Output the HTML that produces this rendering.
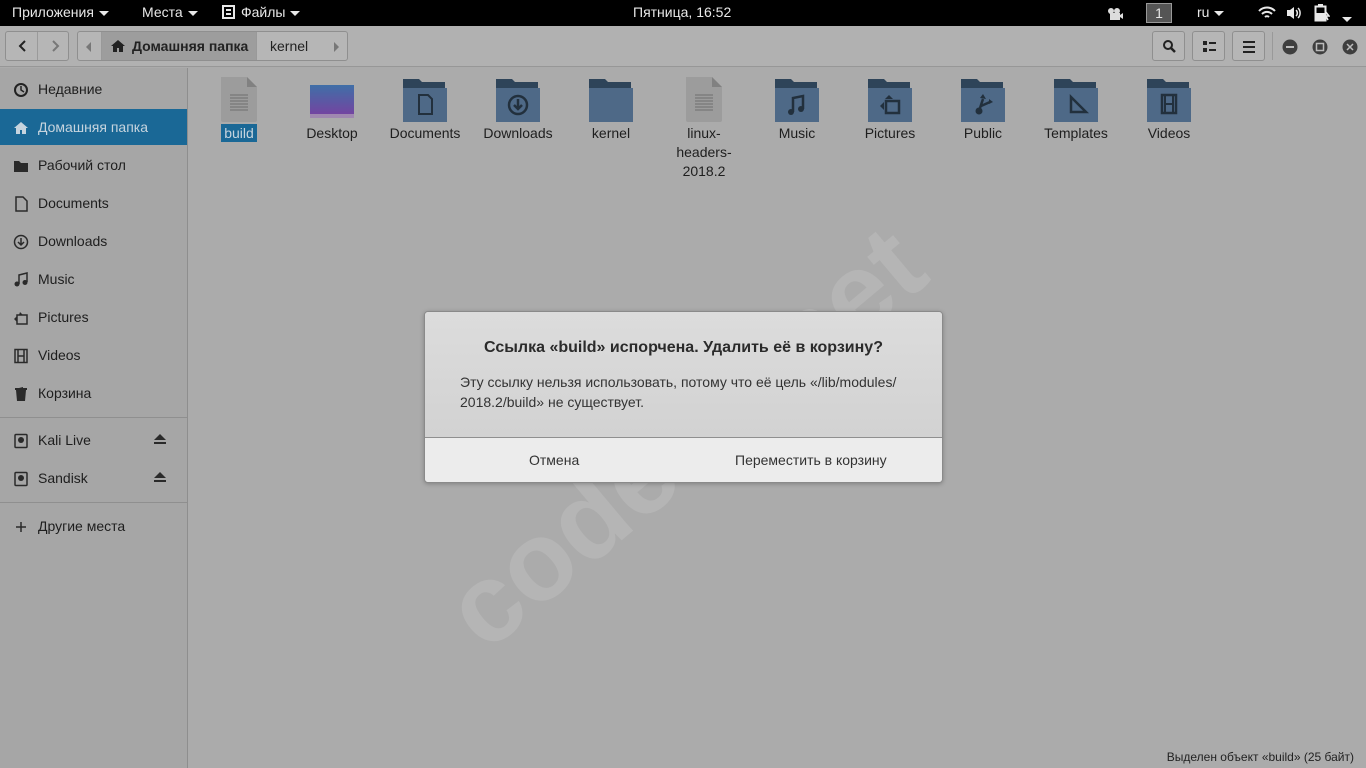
<!DOCTYPE html>
<html><head><meta charset="utf-8"><style>
*{margin:0;padding:0;box-sizing:border-box}
body{width:1366px;height:768px;overflow:hidden;background:#ababab;font-family:"Liberation Sans","DejaVu Sans",sans-serif;font-size:14px;color:#1e1e1e;position:relative}
.top{position:absolute;left:0;top:0;width:1366px;height:26px;background:#000;color:#e8e8e8;font-size:14px}
.top span{position:absolute;top:4px}
.tri{display:inline-block;width:0;height:0;border-left:5px solid transparent;border-right:5px solid transparent;border-top:5px solid #e8e8e8;vertical-align:middle;margin-left:5px}
.hb{position:absolute;left:0;top:26px;width:1366px;height:41px;background:#b1b1b1;border-bottom:1px solid #979797}
.btn{position:absolute;border:1px solid #8f8f8f;border-radius:3px;background:#b6b6b6}
.side{position:absolute;left:0;top:68px;width:188px;height:700px;background:#a6a6a6;border-right:1px solid #8e8e8e}
.si{position:absolute;left:0;width:187px;height:36px;line-height:36px;padding-left:38px}
.si svg{position:absolute;left:13px;top:11px}
.sep{position:absolute;left:0;width:187px;height:1px;background:#8f8f8f}
.it{position:absolute;top:76px;width:90px;text-align:center;font-size:14px;line-height:19px}
.it svg{display:block;margin:0 auto 0}
.dlg{position:absolute;left:424px;top:311px;width:519px;height:172px;border:1px solid #8a8a8a;border-radius:4px;background:#d6d6d6;overflow:hidden;box-shadow:0 1px 4px rgba(0,0,0,.25)}
</style></head><body>
<div class="top">
<span style="left:12px">Приложения<i class="tri"></i></span>
<span style="left:142px">Места<i class="tri"></i></span>
<span style="left:222px"><svg width="13" height="14" style="vertical-align:-2px;margin-right:6px"><rect x="1" y="1" width="11" height="12" fill="none" stroke="#e8e8e8" stroke-width="2"/><rect x="4" y="4" width="5" height="2" fill="#e8e8e8"/><rect x="4" y="8" width="5" height="2" fill="#e8e8e8"/></svg>Файлы<i class="tri"></i></span>
<span style="left:633px">Пятница, 16:52</span>
<span style="left:1107px;top:7px"><svg width="16" height="12"><circle cx="4" cy="3" r="3" fill="#ddd"/><circle cx="10" cy="3" r="3" fill="#ddd"/><rect x="3" y="5" width="10" height="7" fill="#ddd"/><path d="M13 7l3-2v6l-3-2z" fill="#ddd"/></svg></span>
<span style="left:1146px;top:3px;width:26px;height:20px;background:#555;border:1px solid #999;text-align:center;line-height:18px">1</span>
<span style="left:1197px">ru<i class="tri"></i></span>
<span style="left:1258px;top:6px"><svg width="18" height="14"><path d="M1 5a11 11 0 0 1 16 0M4 8a7 7 0 0 1 10 0M7 11a3 3 0 0 1 4 0" stroke="#e8e8e8" stroke-width="2" fill="none"/></svg></span>
<span style="left:1286px;top:6px"><svg width="18" height="14"><path d="M1 4h3l4-3v12l-4-3H1z" fill="#e8e8e8"/><path d="M10 4a4 4 0 0 1 0 6M12 2a7 7 0 0 1 0 10" stroke="#e8e8e8" stroke-width="1.5" fill="none"/></svg></span>
<span style="left:1314px;top:4px"><svg width="16" height="18"><rect x="4" y="0" width="5" height="2" fill="#e8e8e8"/><rect x="1.5" y="2.5" width="10" height="14" fill="none" stroke="#e8e8e8" stroke-width="2"/><rect x="2" y="9" width="9" height="7" fill="#e8e8e8"/><path d="M11 7l4 5h-3l2 4" stroke="#e8e8e8" stroke-width="1.5" fill="none"/></svg></span>
<span style="left:1342px;top:10px"><i class="tri" style="margin:0"></i></span>
</div>
<div class="hb">
<div class="btn" style="left:5px;top:5px;width:64px;height:30px"><div style="position:absolute;left:31px;top:0;width:1px;height:28px;background:#9a9a9a"></div>
<svg style="position:absolute;left:12px;top:8px" width="10" height="12"><path d="M7 1L2 6l5 5" stroke="#222" stroke-width="2" fill="none"/></svg>
<svg style="position:absolute;left:44px;top:8px" width="10" height="12"><path d="M3 1l5 5-5 5" stroke="#777" stroke-width="2" fill="none"/></svg></div>
<div class="btn" style="left:77px;top:5px;width:271px;height:30px;overflow:hidden">
<svg style="position:absolute;left:8px;top:10px" width="6" height="10"><path d="M5 0v10L0 5z" fill="#777"/></svg>
<div style="position:absolute;left:23px;top:0;width:156px;height:28px;background:#9d9d9d;border-left:1px solid #999;border-right:1px solid #999;font-weight:bold;line-height:28px;padding-left:30px;color:#222">Домашняя папка</div>
<svg style="position:absolute;left:32px;top:7px" width="16" height="14"><path d="M8 1L1 7h2v6h4V9h2v4h4V7h2z" fill="#222"/></svg>
<div style="position:absolute;left:192px;top:0;line-height:28px;color:#222">kernel</div>
<svg style="position:absolute;left:256px;top:10px" width="6" height="10"><path d="M0 0v10l5-5z" fill="#777"/></svg></div>
<div class="btn" style="left:1152px;top:5px;width:33px;height:30px"><svg style="position:absolute;left:9px;top:7px" width="15" height="15"><circle cx="6" cy="6" r="4" stroke="#222" stroke-width="2" fill="none"/><path d="M9 9l4 4" stroke="#222" stroke-width="2.5"/></svg></div>
<div class="btn" style="left:1192px;top:5px;width:33px;height:30px"><svg style="position:absolute;left:10px;top:9px" width="14" height="12"><rect x="0" y="0" width="4" height="4" fill="#222"/><rect x="0" y="7" width="4" height="4" fill="#222"/><rect x="6" y="1" width="7" height="2" fill="#222"/><rect x="6" y="8" width="7" height="2" fill="#222"/></svg></div>
<div class="btn" style="left:1232px;top:5px;width:33px;height:30px"><svg style="position:absolute;left:10px;top:9px" width="13" height="12"><rect y="0" width="12" height="2" fill="#222"/><rect y="5" width="12" height="2" fill="#222"/><rect y="10" width="12" height="2" fill="#222"/></svg></div>
<div style="position:absolute;left:1272px;top:6px;width:1px;height:28px;background:#999"></div>
<svg style="position:absolute;left:1282px;top:13px" width="76" height="16"><circle cx="8" cy="8" r="7.5" fill="#3e3e3e"/><rect x="4" y="7" width="8" height="2" fill="#bbb"/><circle cx="38" cy="8" r="7.5" fill="#3e3e3e"/><rect x="34.5" y="4.5" width="7" height="7" fill="none" stroke="#bbb" stroke-width="1.5"/><circle cx="68" cy="8" r="7.5" fill="#3e3e3e"/><path d="M65 5l6 6M71 5l-6 6" stroke="#bbb" stroke-width="1.5"/></svg>
</div>
<div class="side">
<div class="si" style="top:3px"><svg width="16" height="16"><circle cx="8" cy="8" r="6" stroke="#222" stroke-width="2" fill="none"/><path d="M8 4v4l3 2" stroke="#222" stroke-width="1.5" fill="none"/></svg>Недавние</div>
<div class="si" style="top:41px;background:#1a6896;color:#c6d4de"><svg width="16" height="16"><path d="M8 2L1 8h2v6h4v-4h2v4h4V8h2z" fill="#c6d4de"/></svg>Домашняя папка</div>
<div class="si" style="top:79px"><svg width="16" height="16"><path d="M1 3h5l2 2h7v9H1z" fill="#2a2a2a"/></svg>Рабочий стол</div>
<div class="si" style="top:117px"><svg width="16" height="16"><path d="M3 1h7l4 4v10H3z" fill="none" stroke="#2a2a2a" stroke-width="1.5"/></svg>Documents</div>
<div class="si" style="top:155px"><svg width="16" height="16"><circle cx="8" cy="8" r="6.5" stroke="#2a2a2a" stroke-width="1.5" fill="none"/><path d="M8 4v7M5 8l3 3 3-3" stroke="#2a2a2a" stroke-width="1.5" fill="none"/></svg>Downloads</div>
<div class="si" style="top:193px"><svg width="16" height="16"><path d="M6 12V3l8-2v9" stroke="#2a2a2a" stroke-width="1.5" fill="none"/><circle cx="4" cy="12" r="2.5" fill="#2a2a2a"/><circle cx="12" cy="10.5" r="2.5" fill="#2a2a2a"/></svg>Music</div>
<div class="si" style="top:231px"><svg width="16" height="16"><rect x="4" y="5" width="10" height="9" fill="none" stroke="#2a2a2a" stroke-width="1.5"/><path d="M1 9l3-3v6zM7 2l3 3H6z" fill="#2a2a2a"/></svg>Pictures</div>
<div class="si" style="top:269px"><svg width="16" height="16"><rect x="2" y="1.5" width="12" height="13" fill="none" stroke="#2a2a2a" stroke-width="1.5"/><path d="M5 2v12M11 2v12M5 8h6" stroke="#2a2a2a" stroke-width="1.5"/></svg>Videos</div>
<div class="si" style="top:307px"><svg width="16" height="16"><path d="M3 4h10l-1 11H4z M2 2h12v2H2z M6 1h4v1" fill="#2a2a2a"/></svg>Корзина</div>
<div class="sep" style="top:349px"></div>
<div class="si" style="top:354px"><svg width="16" height="16"><rect x="2" y="1.5" width="12" height="13" rx="1" fill="none" stroke="#2a2a2a" stroke-width="1.5"/><circle cx="8" cy="7" r="3" fill="#2a2a2a"/></svg>Kali Live<svg style="left:153px;top:12px" width="14" height="12"><path d="M7 0l6 6H1z M1 8h12v2H1z" fill="#2a2a2a"/></svg></div>
<div class="si" style="top:392px"><svg width="16" height="16"><rect x="2" y="1.5" width="12" height="13" rx="1" fill="none" stroke="#2a2a2a" stroke-width="1.5"/><circle cx="8" cy="7" r="3" fill="#2a2a2a"/></svg>Sandisk<svg style="left:153px;top:12px" width="14" height="12"><path d="M7 0l6 6H1z M1 8h12v2H1z" fill="#2a2a2a"/></svg></div>
<div class="sep" style="top:434px"></div>
<div class="si" style="top:440px"><svg width="16" height="16"><path d="M8 3v10M3 8h10" stroke="#2a2a2a" stroke-width="1.5"/></svg>Другие места</div>
</div>

<div class="it" style="left:194px"><svg width="40" height="48"><path d="M2 1h26l10 10v33a2 2 0 0 1-2 2H4a2 2 0 0 1-2-2z" fill="#9c9c9c"/><path d="M28 1l10 10H28z" fill="#818181"/><path d="M11 19h18M11 22h18M11 25h18M11 28h18M11 31h18M11 34h18" stroke="#6e6e6e"/></svg><span style="background:#1a6896;color:#c6d4de;padding:1px 3px">build</span></div>
<div class="it" style="left:287px"><svg width="46" height="48"><defs><linearGradient id="g" x1="0" y1="0" x2="0" y2="1"><stop offset="0" stop-color="#3f6fa7"/><stop offset="1" stop-color="#7a3fa0"/></linearGradient></defs><rect x="1" y="9" width="44" height="33" fill="url(#g)"/><rect x="1" y="38" width="44" height="4" fill="#a088b0"/></svg>Desktop</div>
<svg width="0" height="0" style="position:absolute"><defs><g id="f"><path d="M2 9V3h16l3 3h23v40H2z" fill="#2e4459"/><rect x="2" y="12" width="44" height="34" fill="#4e6987"/></g></defs></svg>
<div class="it" style="left:380px"><svg width="48" height="48"><use href="#f"/><path d="M18 19h9l4 4v15H18z" fill="none" stroke="#22303d" stroke-width="2"/></svg>Documents</div>
<div class="it" style="left:473px"><svg width="48" height="48"><use href="#f"/><circle cx="24" cy="29" r="9" fill="none" stroke="#22303d" stroke-width="2.5"/><path d="M24 23v10M20 29l4 4 4-4" stroke="#22303d" stroke-width="2.5" fill="none"/></svg>Downloads</div>
<div class="it" style="left:566px"><svg width="48" height="48"><use href="#f"/></svg>kernel</div>
<div class="it" style="left:659px"><svg width="40" height="48"><path d="M2 1h26l10 10v33a2 2 0 0 1-2 2H4a2 2 0 0 1-2-2z" fill="#9c9c9c"/><path d="M28 1l10 10H28z" fill="#818181"/><path d="M11 19h18M11 22h18M11 25h18M11 28h18M11 31h18M11 34h18" stroke="#6e6e6e"/></svg>linux-<br>headers-<br>2018.2</div>
<div class="it" style="left:752px"><svg width="48" height="48"><use href="#f"/><path d="M20 36V22l10-2v13" stroke="#22303d" stroke-width="2.5" fill="none"/><circle cx="18" cy="36" r="3" fill="#22303d"/><circle cx="28" cy="33" r="3" fill="#22303d"/></svg>Music</div>
<div class="it" style="left:845px"><svg width="48" height="48"><use href="#f"/><rect x="20" y="25" width="13" height="12" fill="none" stroke="#22303d" stroke-width="2.5"/><path d="M14 30l4-4v8zM23 19l4 4h-8z" fill="#22303d"/></svg>Pictures</div>
<div class="it" style="left:938px"><svg width="48" height="48"><use href="#f"/><circle cx="20" cy="35" r="3.5" fill="#22303d"/><path d="M20 35l4-12M22 30l9-4" stroke="#22303d" stroke-width="2.5"/><path d="M21 22l3-4 3 5zM30 23l4 3-4 2z" fill="#22303d"/></svg>Public</div>
<div class="it" style="left:1031px"><svg width="48" height="48"><use href="#f"/><path d="M19 21v15h15z" fill="none" stroke="#22303d" stroke-width="2.5"/></svg>Templates</div>
<div class="it" style="left:1124px"><svg width="48" height="48"><use href="#f"/><rect x="17" y="19" width="14" height="18" fill="none" stroke="#22303d" stroke-width="2.5"/><path d="M20 20v16M28 20v16M20 28h8" stroke="#22303d" stroke-width="2"/></svg>Videos</div>

<div style="position:absolute;font-size:112px;font-weight:bold;color:rgba(255,255,255,.12);transform:rotate(-40deg);transform-origin:0 0;left:420px;top:575px;white-space:nowrap">codeby.net</div>

<div class="dlg">
<div style="position:absolute;top:0;left:0;width:517px;height:125px;background:linear-gradient(#dcdcdc,#d2d2d2)"></div>
<div style="position:absolute;top:27px;width:517px;text-align:center;font-weight:bold;font-size:16px;color:#2b2b2b">Ссылка «build» испорчена. Удалить её в корзину?</div>
<div style="position:absolute;top:60px;left:35px;width:460px;font-size:14px;line-height:20px;color:#333">Эту ссылку нельзя использовать, потому что её цель «/lib/modules/ 2018.2/build» не существует.</div>
<div style="position:absolute;top:125px;left:0;width:517px;height:45px;background:#ececec;border-top:1px solid #8f8f8f"></div>
<div style="position:absolute;top:140px;left:104px;color:#333">Отмена</div>
<div style="position:absolute;top:140px;left:310px;color:#333">Переместить в корзину</div>
</div>
<div style="position:absolute;right:12px;top:750px;font-size:12px;color:#222">Выделен объект «build»  (25 байт)</div>
</body></html>
